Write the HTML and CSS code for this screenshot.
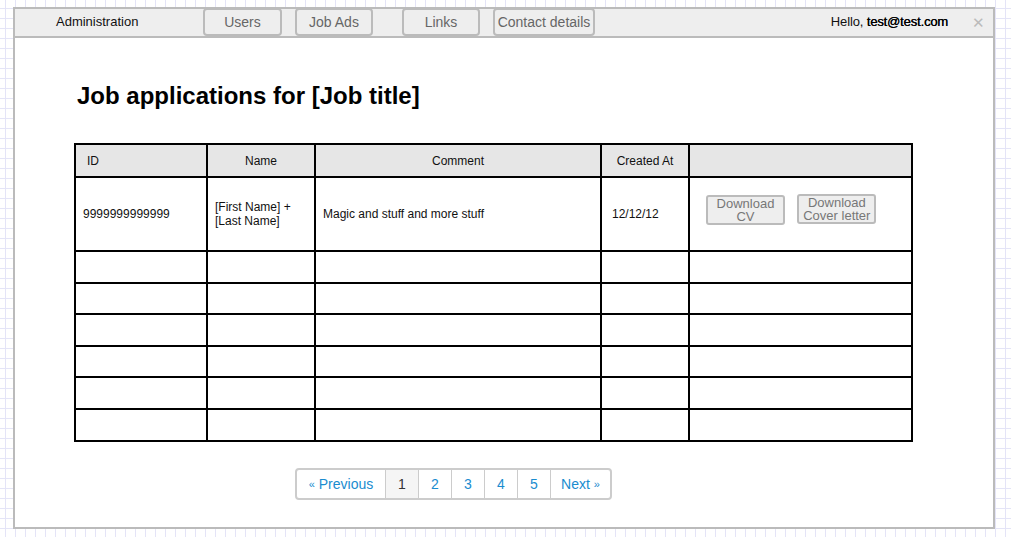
FILE: index.html
```html
<!DOCTYPE html>
<html>
<head>
<meta charset="utf-8">
<link rel="stylesheet" href="styles.css">
</head>
<body>
<div class="frame">
  <div class="topbar">
    <div class="brand">Administration</div>
    <div class="tab tab-users">Users</div>
    <div class="tab tab-jobs">Job Ads</div>
    <div class="tab tab-links">Links</div>
    <div class="tab tab-contact">Contact details</div>
    <div class="spacer"></div>
    <div class="hello">Hello, <b>test@test.com</b></div>
    <div class="close">&#x2715;</div>
  </div>
  <div class="content">
    <h1 class="title">Job applications for [Job title]</h1>
    <table class="grid">
      <colgroup>
        <col class="c1"><col class="c2"><col class="c3"><col class="c4"><col class="c5">
      </colgroup>
      <thead>
        <tr>
          <th class="left">ID</th>
          <th>Name</th>
          <th>Comment</th>
          <th>Created At</th>
          <th></th>
        </tr>
      </thead>
      <tbody>
        <tr class="first">
          <td>9999999999999</td>
          <td>[First Name] +<br>[Last Name]</td>
          <td>Magic and stuff and more stuff</td>
          <td class="date">12/12/12</td>
          <td class="actions">
            <span class="btn btn-cv">Download<br>CV</span>
            <span class="btn btn-cover">Download<br>Cover letter</span>
          </td>
        </tr>
        <tr><td></td><td></td><td></td><td></td><td></td></tr>
        <tr><td></td><td></td><td></td><td></td><td></td></tr>
        <tr><td></td><td></td><td></td><td></td><td></td></tr>
        <tr><td></td><td></td><td></td><td></td><td></td></tr>
        <tr><td></td><td></td><td></td><td></td><td></td></tr>
        <tr><td></td><td></td><td></td><td></td><td></td></tr>
      </tbody>
    </table>
    <div class="pager-wrap">
      <div class="pager">
        <span class="pg pg-prev"><span class="arr">&laquo;</span> Previous</span>
        <span class="pg pg-num active">1</span>
        <span class="pg pg-num">2</span>
        <span class="pg pg-num">3</span>
        <span class="pg pg-num">4</span>
        <span class="pg pg-num">5</span>
        <span class="pg pg-next">Next <span class="arr">&raquo;</span></span>
      </div>
    </div>
  </div>
</div>
</body>
</html>
```

FILE: styles.css
```css
html, body {
  margin: 0;
  padding: 0;
}
body {
  width: 1011px;
  height: 537px;
  overflow: hidden;
  font-family: "Liberation Sans", Arial, sans-serif;
  background-color: #ffffff;
  background-image:
    linear-gradient(to right, #e4e4f7 1px, transparent 1px),
    linear-gradient(to bottom, #e4e4f7 1px, transparent 1px);
  background-size: 10px 10px;
  background-position: 5px 8px;
  padding-top: 7px;
  box-sizing: border-box;
}
.frame {
  margin-left: 13px;
  width: 982px;
  height: 522px;
  box-sizing: border-box;
  border: 2px solid #bbbbbb;
  background: #ffffff;
}
.topbar {
  display: flex;
  align-items: flex-start;
  height: 29px;
  box-sizing: border-box;
  background: #eeeeee;
  border-bottom: 2px solid #bbbbbb;
}
.brand {
  width: 188px;
  box-sizing: border-box;
  padding-left: 41px;
  font-size: 13px;
  color: #111;
  line-height: 26px;
}
.tab {
  box-sizing: border-box;
  border: 2px solid #bbbbbb;
  border-radius: 4px;
  background: #eeeeee;
  color: #666666;
  font-size: 14px;
  text-align: center;
  line-height: 24px;
  height: 28px;
  margin-top: -1px;
}
.tab-users { width: 79px; }
.tab-jobs { width: 78px; margin-left: 13px; }
.tab-links { width: 78px; margin-left: 29px; }
.tab-contact { width: 102px; margin-left: 13px; }
.spacer { flex: 1; }
.hello {
  font-size: 13px;
  color: #111;
  line-height: 26px;
  margin-right: 24px;
  letter-spacing: -0.15px;
}
.hello b {
  font-weight: normal;
  color: #000;
  text-shadow: 0.3px 0 0 #000;
}
.close {
  font-size: 15px;
  color: #bbbbbb;
  line-height: 27px;
  margin-right: 8px;
}
.content {
  padding-left: 60px;
}
.title {
  margin: 44px 0 0 2px;
  font-size: 24px;
  line-height: 28px;
  font-weight: bold;
  color: #000;
}
.grid {
  margin-top: 33px;
  margin-left: -1px;
  border-collapse: collapse;
  table-layout: fixed;
  width: 837px;
  font-size: 12px;
  color: #111;
}
.c1 { width: 132px; }
.c2 { width: 108px; }
.c3 { width: 286px; }
.c4 { width: 88px; }
.c5 { width: 223px; }
.grid th, .grid td {
  border: 2px solid #000;
  padding: 0 7px;
  height: 29.6px;
}
.grid th {
  background: #e6e6e6;
  font-weight: normal;
  text-align: center;
  height: 31px;
}
.grid th.left {
  text-align: left;
  padding-left: 11px;
}
.grid td {
  text-align: left;
}
.grid tr.first td {
  height: 72px;
}
.grid td.date {
  padding-left: 10px;
}
.actions {
  padding-left: 16px !important;
}
.btn {
  display: inline-block;
  vertical-align: middle;
  box-sizing: border-box;
  width: 79px;
  height: 30px;
  border: 2px solid #bbbbbb;
  border-radius: 3px;
  background: #eeeeee;
  color: #777777;
  font-size: 13px;
  line-height: 13px;
  text-align: center;
  padding-top: 0;
}
.btn-cv {
  position: relative;
  top: -4px;
}
.btn-cover {
  margin-left: 9px;
  position: relative;
  top: -5px;
}
.pager-wrap {
  display: flex;
  padding-left: 220px;
  margin-top: 26px;
}
.pager {
  display: flex;
  box-sizing: border-box;
  height: 32px;
  border: 2px solid #cccccc;
  border-radius: 4px;
  overflow: hidden;
  font-size: 14px;
  color: #1a8ccf;
}
.pg {
  box-sizing: border-box;
  line-height: 28px;
  text-align: center;
  border-left: 1px solid #cccccc;
}
.arr {
  font-size: 11px;
  vertical-align: 1px;
}
.pg-prev {
  width: 88px;
  border-left: none;
}
.pg-num { width: 33px; }
.pg-next { width: 60px; }
.pg.active {
  background: #f5f5f5;
  color: #333333;
}
```
